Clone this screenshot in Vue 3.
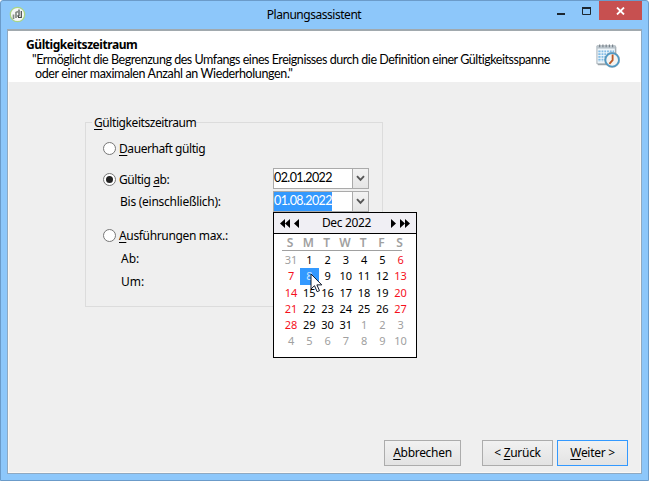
<script setup>
const weekdays = ['S', 'M', 'T', 'W', 'T', 'F', 'S']
const days = [
  { n: 31, out: true },
  ...Array.from({ length: 31 }, (_, i) => ({ n: i + 1, out: false })),
  ...Array.from({ length: 10 }, (_, i) => ({ n: i + 1, out: true })),
].map((d, i) => ({
  ...d,
  red: !d.out && (i % 7 === 6 || i % 7 === 0),
  selected: !d.out && d.n === 8,
}))
</script>

<template>
  <div class="window">
    <header class="titlebar">
      <svg class="app-icon" width="17" height="17" viewBox="0 0 17 17">
        <circle cx="8.500" cy="8.500" r="7.200" fill="#f6f7f6" stroke="#a9d586" stroke-width="1.300" />
        <path d="M4.500 13V8.500M7 12V6.500l2-1" fill="none" stroke="#858b86" stroke-width="1.700" />
        <path d="M10 3.500v6.500M8.500 9.500l1.500 1.800M12.300 5v6.500H9" fill="none" stroke="#454b48" stroke-width="1.200" />
      </svg>
      <h1 class="title">Planungsassistent</h1>
      <div class="controls">
        <svg class="ctl" width="60" height="20" viewBox="0 0 60 20">
          <rect x="18" y="12" width="8" height="2" fill="#1c2730" />
          <path d="M43.500 6.500h8v7h-8z" fill="none" stroke="#1c2730" stroke-width="1" />
          <path d="M43 7h9" stroke="#1c2730" stroke-width="2" />
        </svg>
        <div class="close">
          <svg width="9" height="8" viewBox="0 0 9 8">
            <path d="M1 .5l7 7M8 .5l-7 7" stroke="#fff" stroke-width="1.800" />
          </svg>
        </div>
      </div>
    </header>
    <main class="client">
      <section class="banner">
        <div class="banner-text">
          <h2>Gültigkeitszeitraum</h2>
          <p class="desc">"Ermöglicht die Begrenzung des Umfangs eines Ereignisses durch die Definition einer Gültigkeitsspanne</p>
          <p class="desc second">oder einer maximalen Anzahl an Wiederholungen."</p>
        </div>
        <svg class="cal-icon" width="24" height="24" viewBox="0 0 26 26">
          <path d="M2 3h20v20H2z" fill="#9aa2a8" />
          <path d="M1 2h20v19.500H1z" fill="#eef5fa" stroke="#a0aab1" stroke-width="1" />
          <path d="M1 2h20v3H1z" fill="#bcc6cd" />
          <path d="M4 .5v3M7.500 .5v3M11 .5v3M14.500 .5v3M18 .5v3" stroke="#747e87" stroke-width="1.200" />
          <path d="M2.500 7h17v12h-17z" fill="#81bce6" />
          <path d="M2 9.500h18M2 12.500h18M2 15.500h18M2 18.500h18M5.500 6v14M8.500 6v14M11.500 6v14M14.500 6v14M17.500 6v14" stroke="#f2f8fc" stroke-width="1" />
          <circle cx="17.500" cy="17.200" r="7.300" fill="#f5f3f0" stroke="#4d9ac7" stroke-width="1.900" />
          <circle cx="17.500" cy="17.200" r="8.200" fill="none" stroke="#718c9c" stroke-width=".5" />
          <path d="M18 11.500v6l-3.500 4" fill="none" stroke="#bd5926" stroke-width="2" />
        </svg>
      </section>
      <section class="content">
        <div class="group">
          <div class="legend"><span><u>G</u>ültigkeitszeitraum</span></div>
          <div class="row r1"><i class="radio"></i><span class="tight"><u>D</u>auerhaft gültig</span></div>
          <div class="row r2">
            <i class="radio on"></i><span class="lab tight">Gültig <u>a</u>b:</span>
            <div class="combo">
              <span class="val"><b>02.01.2022</b></span>
              <span class="drop"><svg width="9" height="7" viewBox="0 0 9 7"><path d="M1 1.200l3.500 3.700L8 1.200" fill="none" stroke="#565656" stroke-width="1.900" /></svg></span>
            </div>
          </div>
          <div class="row r3">
            <span class="lab sub">Bis (einschließlich):</span>
            <div class="combo">
              <span class="val"><b class="marked">01.08.2022</b></span>
              <span class="drop"><svg width="9" height="7" viewBox="0 0 9 7"><path d="M1 1.200l3.500 3.700L8 1.200" fill="none" stroke="#565656" stroke-width="1.900" /></svg></span>
              <div class="popup">
                <div class="month">
                  <svg width="22" height="9" viewBox="0 0 22 9"><path d="M6 0v9L1 4.500zM11 0v9L6 4.500zM20 0v9L15 4.500z" /></svg>
                  <span>Dec 2022</span>
                  <svg width="22" height="9" viewBox="0 0 22 9"><path d="M2 0v9l5-4.500zM11 0v9l5-4.500zM16 0v9l5-4.500z" /></svg>
                </div>
                <div class="week"><span v-for="(w, i) in weekdays" :key="i">{{ w }}</span></div>
                <div class="days">
                  <span v-for="(d, i) in days" :key="i" :class="{ out: d.out, red: d.red, selected: d.selected }">{{ d.n }}</span>
                </div>
                <svg class="cursor" width="13" height="20" viewBox="0 0 13 20">
                  <path d="M1 1v15l3.500-3.300 2.600 6 2.400-1-2.600-5.800h4.900z" fill="#fff" stroke="#111a2c" stroke-width="1" />
                </svg>
              </div>
            </div>
          </div>
          <div class="row r4"><i class="radio"></i><span class="runs"><u>A</u>usführungen max.:</span></div>
          <div class="row r5"><span class="ab">Ab:</span></div>
          <div class="row r6"><span class="ab">Um:</span></div>
        </div>
      </section>
      <footer class="buttons">
        <button class="btn cancel"><u>A</u>bbrechen</button>
        <button class="btn back">&lt; <u>Z</u>urück</button>
        <button class="btn next"><u>W</u>eiter &gt;</button>
      </footer>
    </main>
  </div>
</template>

<style>
body {
  background: #fff;
  overflow: hidden;
}
</style>

<style scoped>
* {
  box-sizing: border-box;
}
.window {
  width: 649px;
  height: 481px;
  padding: 0 6px 7px 6px;
  border: 1px solid #6b9bc9;
  border-radius: 3px 3px 0 0;
  background: #8dc7fa;
  font: 12px/16px "Noto Sans", "Open Sans", sans-serif;
  color: #000;
  white-space: nowrap;
}
.titlebar {
  display: grid;
  grid-template-columns: 110px 1fr 131px;
  height: 28px;
}
.app-icon {
  margin: 5px 0 0 2px;
}
.title {
  margin: 6px 0 0;
  font: inherit;
  letter-spacing: -0.47px;
  text-align: center;
}
.controls {
  display: flex;
  justify-content: flex-end;
}
.ctl {
  flex: none;
}
.close {
  flex: none;
  display: flex;
  align-items: center;
  justify-content: center;
  width: 43px;
  height: 19px;
  background: #c75050;
}
.client {
  display: flex;
  flex-direction: column;
  height: 445px;
  border: 1px solid #8ea9c2;
  border-top: 2px solid #a1a9ae;
  background: #efefef;
  box-shadow: inset -1px -1px #fbf7f3, inset 1px 0 #fbf7f3;
}
.banner {
  display: flex;
  justify-content: space-between;
  height: 51px;
  padding: 5px 21px 0 18px;
  background: #fff;
}
.banner h2 {
  margin: 0;
  font-size: 12px;
  line-height: 17px;
  font-weight: 700;
  letter-spacing: -0.43px;
}
.desc {
  margin: 0;
  padding-left: 6px;
  font-family: Lato, "Noto Sans", sans-serif;
  font-size: 12.5px;
  line-height: 14px;
  letter-spacing: -0.46px;
}
.second {
  padding-left: 9px;
  letter-spacing: -0.37px;
}
.cal-icon {
  flex: none;
  margin-top: 8px;
}
.content {
  flex: 1;
  padding: 40px 0 0 77px;
}
.group {
  width: 298px;
  height: 185px;
  border: 1px solid #dcdcdc;
}
.legend {
  display: flex;
  height: 16px;
  margin: -8px 0 0 6px;
}
.legend span {
  padding: 0 0 0 2px;
  background: #efefef;
  letter-spacing: -0.42px;
}
u {
  text-decoration: underline;
  text-underline-offset: 2px;
  text-decoration-thickness: 1px;
}
.row {
  display: flex;
  align-items: center;
  height: 22px;
  padding-left: 17px;
}
.r1 {
  margin-top: 7px;
}
.r2 {
  margin-top: 9px;
}
.r3 {
  margin-top: 0;
}
.r4 {
  margin-top: 12px;
}
.r5,
.r6 {
  margin-top: 1px;
}
.tight {
  letter-spacing: -0.43px;
}
.runs {
  letter-spacing: -0.34px;
}
.radio {
  flex: none;
  display: flex;
  align-items: center;
  justify-content: center;
  width: 13px;
  height: 13px;
  margin: 0 3px 1px 0;
  border: 1px solid #777;
  border-radius: 50%;
  background: #fff;
}
.radio.on::after {
  content: "";
  width: 7px;
  height: 7px;
  border-radius: 50%;
  background: #222;
}
.lab {
  width: 154px;
}
.sub {
  width: 170px;
  padding-left: 17px;
  letter-spacing: -0.26px;
}
.ab {
  padding-left: 18px;
}
.combo {
  position: relative;
  flex: none;
  display: flex;
  width: 96px;
  height: 21px;
  margin-bottom: 3px;
  border: 1px solid #aaa;
  background: #fff;
}
.r3 .combo {
  margin-bottom: 1px;
}
.val {
  flex: 1;
}
.val b {
  display: block;
  width: 58px;
  height: 19px;
  font-family: Lato, "Noto Sans", sans-serif;
  font-size: 12.5px;
  font-weight: 400;
  line-height: 17px;
  letter-spacing: -0.6px;
}
.marked {
  background: #3399ff;
  color: #fff;
}
.drop {
  display: flex;
  align-items: center;
  justify-content: center;
  width: 16px;
  border-left: 1px solid #aaa;
  background: linear-gradient(#f2f2f2, #e5e5e5);
}
.popup {
  position: absolute;
  z-index: 2;
  left: -1px;
  top: 20px;
  width: 144px;
  height: 146px;
  border: 1px solid #000;
  background: #fff;
}
.month {
  display: flex;
  align-items: center;
  justify-content: space-between;
  height: 21px;
  padding: 0 5px;
  border-bottom: 1px solid #000;
  background: #f0eff4;
  letter-spacing: -0.33px;
}
.month span {
  padding-left: 3px;
}
.week {
  display: grid;
  grid-template-columns: repeat(7, 18.25px);
  width: 129px;
  height: 17px;
  margin-left: 7px;
  color: #a0a0a0;
  font-weight: 600;
  line-height: 17px;
  text-align: center;
  background: linear-gradient(#a0a0a0, #a0a0a0) 1px 100% / 120px 1px no-repeat;
}
.days {
  display: grid;
  grid-template-columns: repeat(7, 18.25px);
  grid-auto-rows: 16.3px;
  margin: 1px 0 0 8px;
  font-size: 11px;
  text-align: center;
}
.out {
  color: #a0a0a0;
}
.red {
  color: #f5101c;
}
.selected {
  background: #3399ff;
  color: #cfe6ff;
}
.cursor {
  position: absolute;
  left: 36px;
  top: 60px;
}
.buttons {
  display: flex;
  justify-content: flex-end;
  padding: 0 13px 7px 0;
}
.btn {
  height: 26px;
  padding: 0;
  border: 1px solid #acacac;
  background: linear-gradient(#f1f1f1, #e3e3e3);
  font: inherit;
  color: inherit;
  letter-spacing: -0.3px;
}
.cancel {
  width: 77px;
  margin-right: 21px;
}
.back {
  width: 71px;
  margin-right: 4px;
}
.next {
  width: 71px;
  border-color: #3399ff;
}
</style>
